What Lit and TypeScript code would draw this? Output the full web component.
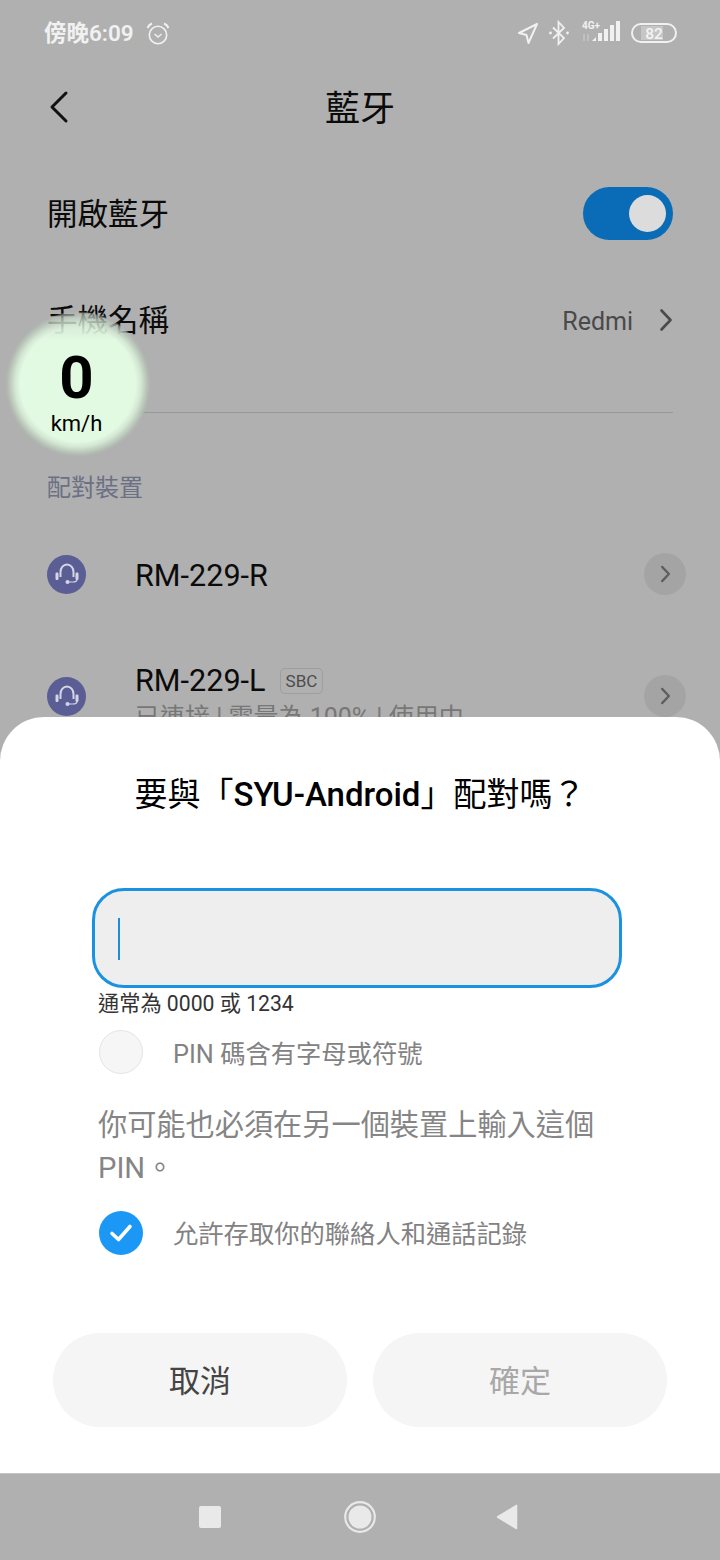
import { LitElement, html, css, svg } from "lit";
import { customElement } from "lit/decorators.js";

const chevronR = (w: number, h: number, color: string, sw: number) => html`<svg width=${w} height=${h} viewBox="0 0 14 24"><path d="M2.5 2.5 L11.5 12 L2.5 21.5" fill="none" stroke=${color} stroke-width=${sw} stroke-linecap="round" stroke-linejoin="round"/></svg>`;

const headset = html`<svg width="28" height="28" viewBox="0 0 28 28"><path d="M7.5 17 V12 a6.5 7.5 0 0 1 13 0 V17" fill="none" stroke="#d4d6e6" stroke-width="2"/><rect x="2.5" y="12.5" width="3" height="7.5" rx="1.2" fill="#d4d6e6"/><rect x="22.5" y="12.5" width="3" height="7.5" rx="1.2" fill="#d4d6e6"/><path d="M24 20 Q23.5 22 20 22 H16" fill="none" stroke="#d4d6e6" stroke-width="1.2"/><circle cx="14.5" cy="22" r="2" fill="#d4d6e6"/></svg>`;

@customElement("app-root")
export class AppRoot extends LitElement {
  static styles = css`
    :host { display: block; width: 720px; height: 1560px; font-family: Roboto, "Noto Sans CJK TC", sans-serif; }
    .screen { position: relative; width: 720px; height: 1560px; overflow: hidden; background: #b0b0b0; display: flex; flex-direction: column; }
    .bg { height: 717px; flex: none; overflow: hidden; display: flex; flex-direction: column; }
    .status { height: 66px; flex: none; display: flex; align-items: center; justify-content: space-between; padding: 0 43px 0 44px; color: #f1f1f1; }
    .status-left { display: flex; align-items: center; gap: 12px; font-size: 22.5px; font-weight: 600; }
    .status-left span { position: relative; top: -2px; }
    .status-right { display: flex; align-items: center; gap: 9px; }
    .header { height: 82px; flex: none; position: relative; display: flex; align-items: center; justify-content: center; font-size: 35px; color: #0b0b0b; padding-bottom: 4px; box-sizing: border-box; }
    .back { position: absolute; left: 48px; top: 24px; display: flex; }
    .row { flex: none; display: flex; align-items: center; justify-content: space-between; padding: 0 47px 0 48px; font-size: 30.5px; color: #0b0b0b; }
    .row > span { margin: -4px 0 0 -1px; }
    .row-bt { height: 53px; margin-top: 39px; }
    .toggle { width: 90px; height: 53px; border-radius: 27px; background: #0a6cb6; display: flex; align-items: center; justify-content: flex-end; padding-right: 7px; box-sizing: border-box; }
    .knob { width: 37px; height: 37px; border-radius: 50%; background: #dcdcdc; }
    .row-name { height: 54px; margin-top: 53px; }
    .value { display: flex; align-items: center; gap: 27px; font-size: 25px; color: #4a4a4a; }
    .value span { position: relative; top: 1px; left: 1px; }
    .divider { height: 1px; background: #989898; margin: 65px 47px 0; flex: none; }
    .section { flex: none; margin: 58px 0 0 47px; font-size: 24px; line-height: 34px; color: #6c7084; }
    .device { position: relative; height: 80px; flex: none; display: flex; align-items: center; padding: 0 34px 0 47px; }
    .d1 { margin-top: 29px; }
    .d2 { margin-top: 42px; }
    .dot { width: 39px; height: 39px; border-radius: 50%; background: #5a5e94; display: flex; align-items: center; justify-content: center; flex: none; }
    .info { margin-left: 49px; flex: 1; min-width: 0; height: 80px; display: flex; flex-direction: column; }
    .d1 .info { justify-content: center; padding-top: 4px; box-sizing: border-box; }
    .d2 .info { padding-top: 7px; box-sizing: border-box; }
    .name { display: flex; align-items: center; gap: 14px; font-size: 30.6px; line-height: 36px; color: #0b0b0b; }
    .badge { font-size: 17px; line-height: 24px; padding: 0 5px; border: 1px solid #9e9e9e; border-radius: 5px; color: #4c4c4c; }
    .sub { font-size: 25px; line-height: 32px; margin-top: 3px; color: #777; white-space: nowrap; }
    .go { width: 42px; height: 42px; border-radius: 50%; background: #a4a4a4; display: flex; align-items: center; justify-content: center; flex: none; }
    .bubble { position: absolute; left: 5px; top: 311px; width: 146px; height: 146px; display: flex; flex-direction: column; align-items: center; color: #000; padding-right: 3px; box-sizing: border-box; }
    .bubble::before { content: ""; position: absolute; inset: 0; border-radius: 50%; background: radial-gradient(circle closest-side, #e2f9e2 0 79%, #d4e8d4 86%, #bfcebf 92%, rgba(178,186,178,.8) 97%, rgba(176,176,176,0) 100%); -webkit-mask-image: linear-gradient(to bottom, rgba(0,0,0,.72) 0, rgba(0,0,0,.8) 10%, #000 20%); mask-image: linear-gradient(to bottom, rgba(0,0,0,.72) 0, rgba(0,0,0,.8) 10%, #000 20%); }
    .speed { position: relative; font-size: 60px; font-weight: 700; line-height: 70px; margin-top: 32px; }
    .unit { position: relative; font-size: 22px; line-height: 26px; margin-top: -2px; }
    .sheet { height: 756px; flex: none; background: #fff; border-radius: 44px 44px 0 0; box-sizing: border-box; display: flex; flex-direction: column; }
    .title { margin-top: 55px; height: 46px; line-height: 46px; text-align: center; font-size: 33px; color: #000; white-space: nowrap; }
    .title b { font-weight: 500; }
    .input { margin: 70px 98px 0 92px; height: 100px; box-sizing: border-box; border: 3px solid #1b91e2; border-radius: 32px; background: #eee; display: flex; align-items: center; padding: 2px 0 0 23px; flex: none; }
    .caret { width: 2px; height: 42px; background: #1a8ed6; }
    .hint { margin: 3px 0 0 98px; font-size: 21.2px; line-height: 26px; color: #333; }
    .opt { display: flex; align-items: center; gap: 30px; margin-left: 99px; font-size: 25.3px; color: #828282; white-space: nowrap; }
    .opt span { margin-top: -1px; }
    .opt2 span { margin-top: -3px; }
    .opt1 { margin-top: 13px; height: 44px; }
    .radio { width: 44px; height: 44px; box-sizing: border-box; border-radius: 50%; background: #f6f6f6; border: 1px solid #e4e4e4; flex: none; }
    .note { margin: 30px 98px 0; font-size: 29.2px; line-height: 43px; color: #858585; }
    .opt2 { margin-top: 21px; height: 44px; }
    .check { width: 44px; height: 44px; border-radius: 50%; background: #1b98f5; display: flex; align-items: center; justify-content: center; flex: none; }
    .buttons { margin: 78px 53px 0; display: flex; gap: 26px; }
    .btn { flex: 1; height: 94px; box-sizing: border-box; padding-bottom: 3px; border-radius: 47px; background: #f5f5f5; display: flex; align-items: center; justify-content: center; font-size: 31px; color: #444; }
    .btn.off { color: #a8a8a8; }
    .nav { height: 87px; flex: none; display: flex; align-items: center; box-sizing: border-box; border-top: 1px solid #c4c4c4; padding-bottom: 1px; }
    .nav-in { display: grid; grid-template-columns: repeat(3, 150px); margin-left: 135px; justify-items: center; align-items: center; }
    .sq { width: 22px; height: 22px; background: #e9e9e9; border-radius: 2px; }
    .tri { margin-right: 6px; }
  `;

  render() {
    return html`<div class="screen">
      <div class="bg">
        <div class="status">
          <div class="status-left"><span>傍晚6:09</span>
            <svg width="24" height="25" viewBox="0 0 24 25" fill="none" stroke="#f1f1f1"><circle cx="12" cy="14" r="8.7" stroke-width="1.6"/><path d="M8.5 13 L12 16 L15.5 13" stroke-width="1.5"/><path d="M1.5 7 Q3 3.5 6 2.5 M22.5 7 Q21 3.5 18 2.5" stroke-width="2"/></svg>
          </div>
          <div class="status-right">
            <svg width="24" height="24" viewBox="0 0 24 24" fill="none" stroke="#f1f1f1" stroke-width="2" stroke-linejoin="round"><path d="M22 3 L4 12 L11.5 14 L13.5 22 Z"/></svg>
            <svg width="22" height="26" viewBox="0 0 22 26" fill="none" stroke="#f1f1f1" stroke-width="1.8"><path d="M5 7.5 L16 18 L10.5 24 V2 L16 8 L5 18.5"/><circle cx="2.5" cy="13" r="1.4" fill="#f1f1f1" stroke="none"/><circle cx="19.5" cy="13" r="1.4" fill="#f1f1f1" stroke="none"/></svg>
            <svg width="40" height="26" viewBox="0 0 40 26" style="margin-left:3px"><text x="0" y="9" font-size="10" font-weight="700" font-family="Roboto" fill="#f1f1f1">4G+</text><path d="M2 14v7M6 21v-7" stroke="#d0d0d0" stroke-width="1"/>${svg`<path d="M10 21 L14 17 V21 Z" fill="#f1f1f1"/><rect x="16" y="13" width="4" height="8" fill="#f1f1f1"/><rect x="22" y="9" width="4" height="12" fill="#f1f1f1"/><rect x="28" y="5" width="4" height="16" fill="#f1f1f1"/><rect x="34" y="1" width="4" height="20" fill="#f1f1f1"/>`}</svg>
            <svg width="46" height="22" viewBox="0 0 46 22"><rect x="1" y="2" width="44" height="18" rx="9" fill="none" stroke="#f1f1f1" stroke-width="2"/><rect x="10" y="4" width="22" height="14" fill="#c6c6c6"/><text x="23" y="16.5" text-anchor="middle" font-size="15.5" font-weight="500" font-family="Roboto" fill="#f4f4f4">82</text></svg>
          </div>
        </div>
        <div class="header"><span class="back"><svg width="22" height="34" viewBox="0 0 22 34"><path d="M18 3 L4 17 L18 31" fill="none" stroke="#111" stroke-width="3" stroke-linecap="round" stroke-linejoin="round"/></svg></span>藍牙</div>
        <div class="row row-bt"><span>開啟藍牙</span><div class="toggle"><div class="knob"></div></div></div>
        <div class="row row-name"><span>手機名稱</span><div class="value"><span>Redmi</span>${chevronR(14, 24, "#4a4a4a", 2.6)}</div></div>
        <div class="divider"></div>
        <div class="section">配對裝置</div>
        <div class="device d1"><div class="dot">${headset}</div><div class="info"><div class="name">RM-229-R</div></div><div class="go">${chevronR(11, 18, "#5e5e5e", 3)}</div></div>
        <div class="device d2"><div class="dot">${headset}</div><div class="info"><div class="name">RM-229-L <span class="badge">SBC</span></div><div class="sub">已連接 | 電量為 100% | 使用中</div></div><div class="go">${chevronR(11, 18, "#5e5e5e", 3)}</div></div>
      </div>
      <div class="bubble"><div class="speed">0</div><div class="unit">km/h</div></div>
      <div class="sheet">
        <div class="title">要與「<b>SYU-Android</b>」配對嗎？</div>
        <div class="input"><div class="caret"></div></div>
        <div class="hint">通常為 0000 或 1234</div>
        <div class="opt opt1"><div class="radio"></div><span>PIN 碼含有字母或符號</span></div>
        <div class="note">你可能也必須在另一個裝置上輸入這個 PIN。</div>
        <div class="opt opt2"><div class="check"><svg width="24" height="20" viewBox="0 0 24 20"><path d="M3 10.5 L9.5 16.5 L21 3.5" fill="none" stroke="#fff" stroke-width="3.6" stroke-linecap="round" stroke-linejoin="round"/></svg></div><span>允許存取你的聯絡人和通話記錄</span></div>
        <div class="buttons"><div class="btn">取消</div><div class="btn off">確定</div></div>
      </div>
      <div class="nav"><div class="nav-in">
        <div class="sq"></div>
        <svg width="32" height="32" viewBox="0 0 32 32"><circle cx="16" cy="16" r="14.8" fill="none" stroke="#e9e9e9" stroke-width="2.2"/><circle cx="16" cy="16" r="11.5" fill="#e9e9e9"/></svg>
        <svg class="tri" width="22" height="26" viewBox="0 0 22 26"><path d="M20.5 1.5 V24.5 L1.5 13 Z" fill="#e9e9e9" stroke="#e9e9e9" stroke-width="1.5" stroke-linejoin="round"/></svg>
      </div></div>
    </div>`;
  }
}
